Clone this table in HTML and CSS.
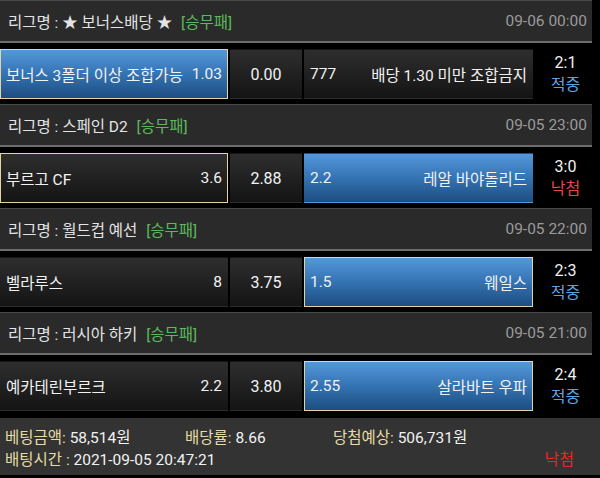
FILE: index.html
```html
<!DOCTYPE html>
<html lang="ko">
<head>
<meta charset="utf-8">
<link rel="stylesheet" href="styles.css">
</head>
<body>
<div class="page">
  <section class="game">
    <div class="league">
      <span class="league-name">리그명 : ★ 보너스배당 ★ <span class="type">[승무패]</span></span>
      <span class="date">09-06 00:00</span>
    </div>
    <div class="row">
      <div class="cell side blue picked"><span>보너스 3폴더 이상 조합가능</span><span>1.03</span></div>
      <div class="cell draw">0.00</div>
      <div class="cell side"><span>777</span><span>배당 1.30 미만 조합금지</span></div>
      <div class="result"><span class="score">2:1</span><span class="hit">적중</span></div>
    </div>
  </section>
  <section class="game">
    <div class="league">
      <span class="league-name">리그명 : 스페인 D2 <span class="type">[승무패]</span></span>
      <span class="date">09-05 23:00</span>
    </div>
    <div class="row">
      <div class="cell side picked"><span>부르고 CF</span><span>3.6</span></div>
      <div class="cell draw">2.88</div>
      <div class="cell side blue"><span>2.2</span><span>레알 바야돌리드</span></div>
      <div class="result"><span class="score">3:0</span><span class="miss">낙첨</span></div>
    </div>
  </section>
  <section class="game">
    <div class="league">
      <span class="league-name">리그명 : 월드컵 예선 <span class="type">[승무패]</span></span>
      <span class="date">09-05 22:00</span>
    </div>
    <div class="row">
      <div class="cell side"><span>벨라루스</span><span>8</span></div>
      <div class="cell draw">3.75</div>
      <div class="cell side blue picked"><span>1.5</span><span>웨일스</span></div>
      <div class="result"><span class="score">2:3</span><span class="hit">적중</span></div>
    </div>
  </section>
  <section class="game">
    <div class="league">
      <span class="league-name">리그명 : 러시아 하키 <span class="type">[승무패]</span></span>
      <span class="date">09-05 21:00</span>
    </div>
    <div class="row">
      <div class="cell side"><span>예카테린부르크</span><span>2.2</span></div>
      <div class="cell draw">3.80</div>
      <div class="cell side blue picked"><span>2.55</span><span>살라바트 우파</span></div>
      <div class="result"><span class="score">2:4</span><span class="hit">적중</span></div>
    </div>
  </section>
  <footer class="summary">
    <div class="line first">
      <span class="item"><span class="label">베팅금액:</span> 58,514원</span>
      <span class="item"><span class="label">배당률:</span> 8.66</span>
      <span class="item"><span class="label">당첨예상:</span> 506,731원</span>
    </div>
    <div class="line second">
      <span class="item"><span class="label">배팅시간 :</span> 2021-09-05 20:47:21</span>
      <span class="status">낙첨</span>
    </div>
  </footer>
</div>
</body>
</html>
```
FILE: styles.css
```css
html, body {
  margin: 0;
  padding: 0;
  background: #000;
}
body {
  width: 600px;
  height: 478px;
  overflow: hidden;
  font-family: Roboto, "Noto Sans CJK KR", sans-serif;
  color: #f0f0f0;
}
.page {
  display: flex;
  flex-direction: column;
}
.league {
  height: 40px;
  margin-right: 8px;
  padding: 0 5px 0 8px;
  display: flex;
  align-items: center;
  justify-content: space-between;
  background: #2a2a2a;
  border-top: 1px solid #4a4a4a;
  border-bottom: 2px solid #6e6e6e;
  font-size: 15.5px;
}
.league-name {
  color: #e4e4e4;
}
.type {
  color: #5cb85c;
  margin-left: 5px;
}
.date {
  color: #9a9a9a;
  font-size: 15.5px;
}
.row {
  display: grid;
  grid-template-columns: 228px 72px 229px 1fr;
  column-gap: 2px;
  padding: 6px 8px 5px 0;
  height: 50px;
}
.cell {
  box-sizing: border-box;
  height: 50px;
  display: flex;
  align-items: center;
  font-size: 15.5px;
  color: #f2f2f2;
  background: linear-gradient(#2e2e2e, #141414);
  border: 1px solid transparent;
}
.side {
  justify-content: space-between;
  padding: 0 5px 0 5px;
}
.draw {
  justify-content: center;
  font-size: 16px;
}
.blue {
  background: linear-gradient(#5597da, #3473b3 50%, #1d4d80);
}
.picked {
  border-color: #e2d5a2;
}
.result {
  display: flex;
  flex-direction: column;
  align-items: center;
  justify-content: center;
  font-size: 16px;
  line-height: 22px;
  padding-left: 4px;
}
.score {
  color: #f0f0f0;
}
.hit {
  color: #5da3e6;
}
.miss {
  color: #e24a4a;
}
.summary {
  margin-top: 2px;
  height: 57px;
  box-sizing: border-box;
  padding: 9px 26px 0 5px;
  background: #333;
  font-size: 15.5px;
  line-height: 22px;
  color: #f2f2f2;
}
.label {
  color: #e6dca6;
}
.line.first {
  display: grid;
  grid-template-columns: 180px 148px 1fr;
}
.line.second {
  display: flex;
  justify-content: space-between;
}
.status {
  color: #e8262a;
  font-size: 16px;
}
```
